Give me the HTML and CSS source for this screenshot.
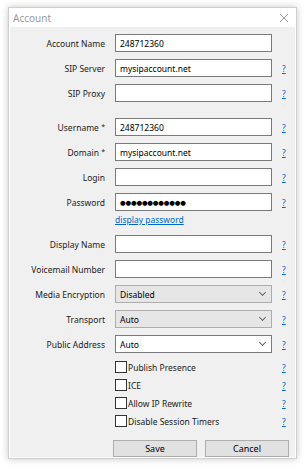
FILE: index.html
```html
<!doctype html>
<html lang="en">
  <head>
    <meta charset="UTF-8" />
    <title>Account</title>
    <link rel="stylesheet" href="styles.css">
  </head>
  <body>
    <div class="window">
      <div class="titlebar">
        <span class="title">Account</span>
        <svg class="close" width="10" height="10" viewBox="0 0 10 10">
          <path d="M1 1L9 9M9 1L1 9" stroke="#9a9a9a" stroke-width="1" fill="none" />
        </svg>
      </div>

      <div class="content">
        <div class="row">
          <label class="label">Account Name</label>
          <div class="field">248712360</div>
        </div>
        <div class="row">
          <label class="label">SIP Server</label>
          <div class="field">mysipaccount.net</div>
          <a class="help" href="#">?</a>
        </div>
        <div class="row">
          <label class="label">SIP Proxy</label>
          <div class="field"></div>
          <a class="help" href="#">?</a>
        </div>

        <div class="row group-start">
          <label class="label">Username <span class="req">*</span></label>
          <div class="field">248712360</div>
          <a class="help" href="#">?</a>
        </div>
        <div class="row">
          <label class="label">Domain <span class="req">*</span></label>
          <div class="field">mysipaccount.net</div>
          <a class="help" href="#">?</a>
        </div>
        <div class="row">
          <label class="label">Login</label>
          <div class="field"></div>
          <a class="help" href="#">?</a>
        </div>
        <div class="row tight">
          <label class="label">Password</label>
          <div class="field password">●●●●●●●●●●●●</div>
          <a class="help" href="#">?</a>
        </div>
        <div class="row link-row">
          <span></span>
          <a class="link" href="#">display password</a>
        </div>

        <div class="row">
          <label class="label">Display Name</label>
          <div class="field"></div>
          <a class="help" href="#">?</a>
        </div>
        <div class="row">
          <label class="label">Voicemail Number</label>
          <div class="field"></div>
          <a class="help" href="#">?</a>
        </div>
        <div class="row">
          <label class="label">Media Encryption</label>
          <div class="field select">Disabled<span class="chevron"></span></div>
          <a class="help" href="#">?</a>
        </div>
        <div class="row">
          <label class="label">Transport</label>
          <div class="field select">Auto<span class="chevron"></span></div>
          <a class="help" href="#">?</a>
        </div>
        <div class="row">
          <label class="label">Public Address</label>
          <div class="field select editable">Auto<span class="chevron"></span></div>
          <a class="help" href="#">?</a>
        </div>

        <div class="checks">
          <div class="row check-row">
            <span></span>
            <label class="check"><span class="box"></span>Publish Presence</label>
            <a class="help" href="#">?</a>
          </div>
          <div class="row check-row">
            <span></span>
            <label class="check"><span class="box"></span>ICE</label>
            <a class="help" href="#">?</a>
          </div>
          <div class="row check-row">
            <span></span>
            <label class="check"><span class="box"></span>Allow IP Rewrite</label>
            <a class="help" href="#">?</a>
          </div>
          <div class="row check-row">
            <span></span>
            <label class="check"><span class="box"></span>Disable Session Timers</label>
            <a class="help" href="#">?</a>
          </div>
        </div>

        <div class="buttons">
          <button class="btn">Save</button>
          <button class="btn">Cancel</button>
        </div>
      </div>
    </div>
  </body>
</html>
```

FILE: styles.css
```css
* {
  margin: 0;
  padding: 0;
  box-sizing: border-box;
}

body {
  font-family: "Noto Sans", "DejaVu Sans", sans-serif;
  font-size: 8.5px;
  color: #000;
  background: #fff;
  padding: 7px 8px;
}

.window {
  width: 289px;
  height: 452px;
  background: #f0f0f0;
  border: 1px solid #cfcfcf;
  box-shadow: 0 0 7px rgba(0, 0, 0, 0.22);
  display: flex;
  flex-direction: column;
}

.titlebar {
  height: 19px;
  background: #fff;
  display: flex;
  align-items: center;
  justify-content: space-between;
  padding: 0 7px 0 4px;
  flex-shrink: 0;
}

.title {
  color: #9a9a9a;
  font-size: 10px;
}

.content {
  flex: 1;
  border: 1px solid #fff;
  border-top: none;
  padding-top: 7px;
}

.row {
  display: grid;
  grid-template-columns: 95px 157px 16px;
  column-gap: 10px;
  align-items: center;
  height: 18px;
  margin-bottom: 7px;
}

.row.group-start {
  margin-top: 16px;
}

.row.tight {
  margin-bottom: 0;
}

.row.link-row {
  height: 17px;
  align-items: start;
  padding-top: 3px;
}

.label {
  text-align: right;
  white-space: nowrap;
  color: #1a1a1a;
}

.req {
  font-size: 7px;
  vertical-align: 2px;
}

.field {
  height: 18px;
  background: #fff;
  border: 1px solid #7a7a7a;
  padding: 0 4px;
  display: flex;
  align-items: center;
  white-space: nowrap;
  overflow: hidden;
}

.field.password {
  font-size: 6.5px;
  letter-spacing: -0.2px;
}

.field.select {
  background: #e6e6e6;
  border-color: #adadad;
  justify-content: space-between;
  padding-right: 6px;
}

.field.select.editable {
  background: #fff;
  border-color: #7a7a7a;
}

.chevron {
  width: 5px;
  height: 5px;
  border-right: 1px solid #666;
  border-bottom: 1px solid #666;
  transform: rotate(45deg);
  margin-top: -3px;
}

.help {
  color: #0066cc;
  text-decoration: underline;
}

.link {
  color: #0066cc;
  text-decoration: underline;
}

.checks {
  margin-top: -2px;
}

.row.check-row {
  margin-bottom: 0;
}

.check {
  display: flex;
  align-items: center;
  gap: 1px;
  color: #1a1a1a;
}

.box {
  width: 12px;
  height: 12px;
  border: 1px solid #333;
  background: #fff;
}

.buttons {
  display: flex;
  gap: 8px;
  margin: 10px 0 0 103px;
}

.btn {
  width: 84px;
  height: 17px;
  font-family: inherit;
  font-size: 9px;
  background: #e1e1e1;
  border: 1px solid #adadad;
  color: #000;
}
```
